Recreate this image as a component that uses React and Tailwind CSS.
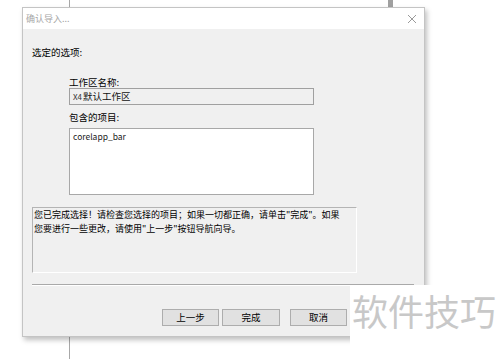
export default function App() {
  const font = { fontFamily: '"Noto Sans CJK SC", "Noto Sans", sans-serif' };
  return (
    <div className="relative w-[500px] h-[359px] bg-white overflow-hidden" style={font}>
      {/* background canvas lines */}
      <div className="absolute left-[69px] top-0 w-px h-[359px] bg-[#a8a8a8]" />
      <div className="absolute left-[388px] top-0 w-[5px] h-[10px] bg-[#a0a0a0]" />

      {/* dialog */}
      <div className="relative ml-[22px] mt-[7px] w-[403px] h-[330px] bg-[#f0f0f0] border border-[#c4c4c4] shadow-[2px_3px_5px_rgba(0,0,0,0.25)] flex flex-col">
        <div className="h-[21px] bg-white flex items-center justify-between pl-[3px] pr-[7px]">
          <span className="text-[9px] text-[#a6a6a6] leading-none">确认导入...</span>
          <svg width="10" height="10" viewBox="0 0 10 10" className="text-[#9a9a9a]">
            <path d="M1 1 L9 9 M9 1 L1 9" stroke="currentColor" strokeWidth="1" />
          </svg>
        </div>
        <div className="flex flex-col pl-[9px] pr-[9px]">
          <div className="mt-[16px] text-[9.5px] leading-[14px] text-black">选定的选项:</div>
          <div className="flex flex-col pl-[37px] mt-[17px]">
            <div className="text-[9.5px] leading-[12px] text-black">工作区名称:</div>
            <div className="w-[245px] h-[17px] border border-[#a0a0a0] bg-[#f0f0f0] flex items-center pl-[3px] text-[9.5px] leading-none text-[#111]">
              <span className="text-[8px] text-[#333] mr-[1px]">X4</span>默认工作区
            </div>
            <div className="mt-[6px] text-[9.5px] leading-[12px] text-black">包含的项目:</div>
            <div className="mt-[5px] w-[245px] h-[67px] border border-[#a8a8a8] bg-white pl-[3px] pt-[1px] text-[8.5px] leading-[12px] text-[#222]">
              corelapp_bar
            </div>
          </div>
          <div className="mt-[12px] w-[325px] h-[66px] border-t border-l border-t-[#b4b4b4] border-l-[#b4b4b4] border-b border-r border-b-white border-r-white text-[9px] leading-[13.5px] text-black pl-[1px] whitespace-nowrap">
            <div>您已完成选择！请检查您选择的项目；如果一切都正确，请单击"完成"。如果</div>
            <div>您要进行一些更改，请使用"上一步"按钮导航向导。</div>
          </div>
          <div className="mt-[11px] h-[2px] border-t border-t-[#a9a9a9] border-b border-b-white mr-[1px]" />
          <div className="mt-[23px] flex pl-[130px] gap-[3px]">
            <button className="w-[57px] h-[17px] bg-[#e1e1e1] border border-[#adadad] text-[9.5px] leading-none text-black">上一步</button>
            <button className="w-[58px] h-[17px] bg-[#e1e1e1] border border-[#adadad] text-[9.5px] leading-none text-black">完成</button>
            <button className="ml-[7px] w-[57px] h-[17px] bg-[#e1e1e1] border border-[#adadad] text-[9.5px] leading-none text-black">取消</button>
          </div>
        </div>
      </div>

      {/* watermark */}
      <div className="absolute left-[350px] top-[285px] right-0 bottom-0 bg-white flex items-start pl-[2px] pt-[5px]">
        <span className="text-[36px] leading-[40px] text-[#c8c8c8]">软件技巧</span>
      </div>
    </div>
  );
}
